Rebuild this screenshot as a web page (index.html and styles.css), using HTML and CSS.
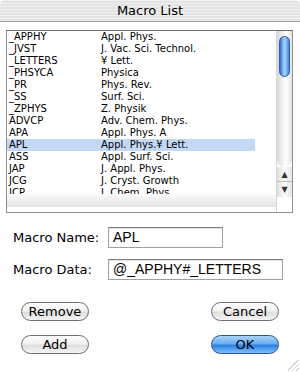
FILE: index.html
```html
<!DOCTYPE html>
<html lang="en">
<head>
<meta charset="UTF-8">
<title>Macro List</title>
<link rel="stylesheet" href="styles.css">
</head>
<body>
<div class="window">
  <div class="titlebar">Macro List</div>

  <div class="listbox">
    <div class="listcol">
      <div class="rows">
        <div class="row"><span class="key">_APPHY</span><span>Appl. Phys.</span></div>
        <div class="row"><span class="key">_JVST</span><span>J. Vac. Sci. Technol.</span></div>
        <div class="row"><span class="key">_LETTERS</span><span>¥ Lett.</span></div>
        <div class="row"><span class="key">_PHSYCA</span><span>Physica</span></div>
        <div class="row"><span class="key">_PR</span><span>Phys. Rev.</span></div>
        <div class="row"><span class="key">_SS</span><span>Surf. Sci.</span></div>
        <div class="row"><span class="key">_ZPHYS</span><span>Z. Physik</span></div>
        <div class="row"><span class="key">ADVCP</span><span>Adv. Chem. Phys.</span></div>
        <div class="row"><span class="key">APA</span><span>Appl. Phys. A</span></div>
        <div class="row sel"><span class="key">APL</span><span>Appl. Phys.¥ Lett.</span></div>
        <div class="row"><span class="key">ASS</span><span>Appl. Surf. Sci.</span></div>
        <div class="row"><span class="key">JAP</span><span>J. Appl. Phys.</span></div>
        <div class="row"><span class="key">JCG</span><span>J. Cryst. Growth</span></div>
        <div class="row"><span class="key">JCP</span><span>J. Chem. Phys.</span></div>
      </div>
      <div class="band"></div>
    </div>
    <div class="vscroll">
      <div class="track">
        <div class="thumb"></div>
      </div>
      <div class="arrow up">▲</div>
      <div class="arrow down">▼</div>
    </div>
  </div>

  <div class="field">
    <label>Macro Name:</label>
    <div class="input short">APL</div>
  </div>
  <div class="field">
    <label>Macro Data:</label>
    <div class="input long">@_APPHY#_LETTERS</div>
  </div>

  <div class="buttons">
    <button>Remove</button>
    <button>Cancel</button>
    <button>Add</button>
    <button class="default">OK</button>
  </div>

  <div class="grip"></div>
</div>
</body>
</html>
```

FILE: styles.css
```css
*{box-sizing:border-box;margin:0;padding:0}
body{width:300px;height:372px;overflow:hidden;background:#fff;font-family:"DejaVu Sans",Verdana,sans-serif;color:#000}
.window{position:relative;width:300px;height:372px;background:#fff}

/* ------- title ------- */
.titlebar{
  height:22px;text-align:center;font-size:13px;line-height:22px;
  border-radius:5px 5px 0 0;border-bottom:1px solid #a8a8a8;
  background:repeating-linear-gradient(#f0f0f0 0 1px,#e4e4e4 1px 3px)}

/* ------- list ------- */
.listbox{
  display:flex;margin:8px 7px 0 6px;height:183px;
  border:1px solid #8e8e8e;border-top-color:#6d6d6d}
.listcol{flex:1;display:flex;flex-direction:column;overflow:hidden}
.rows{height:163px;overflow:hidden}
.row{display:flex;width:248px;height:12px;line-height:12px;font-size:10px;white-space:nowrap;padding-left:2px}
.row .key{width:92px}
.row.sel{background:#c3d8f4}
.band{height:13px;background:linear-gradient(#fbfbfb,#e2e2e2);width:270px}

.vscroll{width:16px;display:flex;flex-direction:column;border-left:1px solid #d6d6d6}
.track{
  height:136px;position:relative;
  background:linear-gradient(90deg,#d8d8d8,#f6f6f6 45%,#fff 60%,#e2e2e2);
  border-bottom-left-radius:8px;border-bottom-right-radius:8px}
.thumb{
  position:absolute;left:2px;top:5px;width:11px;height:41px;border-radius:6px;
  border:1px solid #2a5aa8;
  background:linear-gradient(90deg,#2d6fd6,#8fc2f6 40%,#a9d2fa 55%,#3f86e2)}
.arrow{
  height:15px;font-size:8px;line-height:15px;text-align:center;color:#333;
  background:linear-gradient(90deg,#e0e0e0,#fafafa 50%,#e6e6e6)}
.arrow.up{border-bottom:1px solid #bcbcbc}

/* ------- fields ------- */
.field{display:flex;align-items:center;margin-top:14px;padding-left:13px}
.field + .field{margin-top:11px}
.field label{width:95px;font-size:13px}
.input{
  height:21px;border:1px solid #a0a0a0;border-top-color:#7c7c7c;
  box-shadow:inset 0 1px 1px rgba(0,0,0,.12);
  font-family:"Liberation Sans",Arial,sans-serif;font-size:14px;line-height:19px;padding-left:4px}
.short{width:115px}
.long{width:175px}

/* ------- buttons ------- */
.buttons{display:grid;grid-template-columns:68px 68px;justify-content:space-between;row-gap:14px;margin:22px 21px 0}
button{
  height:19px;border-radius:10px;border:1px solid #6f6f6f;font-family:"DejaVu Sans",sans-serif;font-size:13px;line-height:16px;
  background:linear-gradient(#fefefe,#f2f2f2 45%,#dedede 55%,#f4f4f4);color:#000}
button.default{
  border-color:#2b5798;
  background:linear-gradient(#a9d3fb,#6aaef0 45%,#2f7fe2 55%,#7cc0fa)}

.grip{
  position:absolute;right:1px;bottom:1px;width:11px;height:11px;
  background:linear-gradient(135deg,transparent 45%,#999 46%,transparent 52%,transparent 64%,#999 65%,transparent 71%,transparent 82%,#999 84%,transparent 90%)}
```
